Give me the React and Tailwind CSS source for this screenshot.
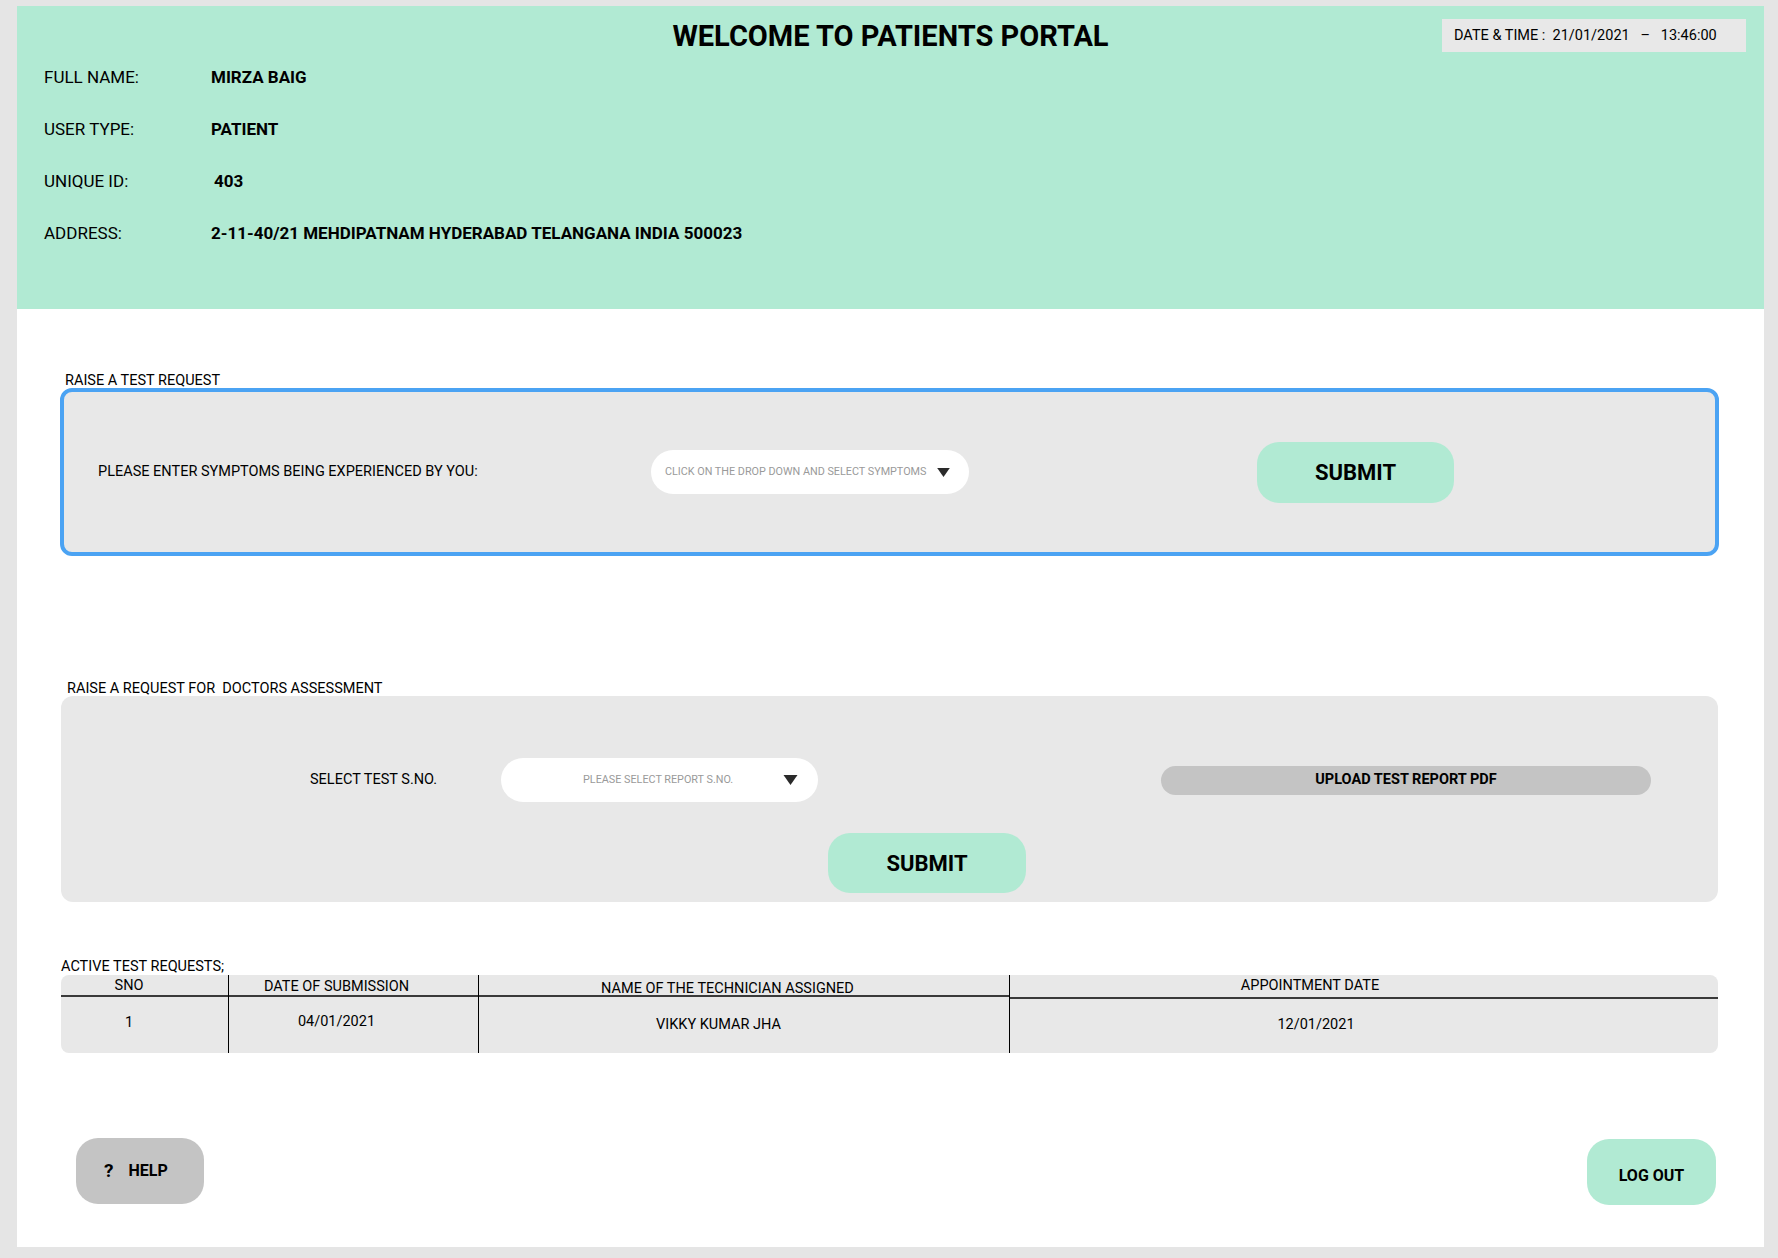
function Caret({ className }) {
  return (
    <svg viewBox="0 0 14 10" className={className}>
      <polygon points="0,0 14,0 7,10" fill="#2a2a2a" />
    </svg>
  )
}

const profile = [
  { label: 'FULL NAME:', value: 'MIRZA BAIG' },
  { label: 'USER TYPE:', value: 'PATIENT' },
  { label: 'UNIQUE ID:', value: '403', nudge: true },
  { label: 'ADDRESS:', value: '2-11-40/21 MEHDIPATNAM HYDERABAD TELANGANA INDIA 500023' },
]

export default function App() {
  return (
    <div className="min-h-screen bg-[#e5e5e5] pl-[17px] pr-[14px] pt-[6px] pb-[11px] font-[Roboto,'Liberation_Sans',sans-serif] text-black">
      <div className="bg-white h-[1241px] flex flex-col">
        {/* header */}
        <div className="h-[303px] bg-[#b1ead3] flex flex-col">
          <div className="grid grid-cols-[1fr_auto_1fr] items-center mt-[13px] h-[33px]">
            <h1 className="col-start-2 text-[29px] font-bold leading-[32px]">WELCOME TO PATIENTS PORTAL</h1>
            <div className="justify-self-end mr-[18px] h-[33px] w-[304px] bg-[#e8e8e8] pl-[12px] flex items-center text-[14.5px] whitespace-pre">
              DATE &amp; TIME :  21/01/2021   –   13:46:00
            </div>
          </div>
          <div className="mt-[13px] flex flex-col gap-[28px]">
            {profile.map((row) => (
              <div key={row.label} className="flex pl-[27px] leading-[24px] text-[17px]">
                <span className="w-[167px]">{row.label}</span>
                <span className={`font-bold ${row.nudge ? 'pl-[3px]' : ''}`}>{row.value}</span>
              </div>
            ))}
          </div>
        </div>

        <div className="pl-[44px] pr-[46px] flex flex-col">
          {/* test request */}
          <div className="mt-[65px] pl-[4px] text-[14.5px] leading-[14px]">RAISE A TEST REQUEST</div>
          <div className="-mx-[1px] h-[168px] rounded-[12px] border-[4px] border-[#4ba3f3] bg-[#e8e8e8] flex items-center pl-[34px]">
            <span className="w-[553px] text-[14.5px]">PLEASE ENTER SYMPTOMS BEING EXPERIENCED BY YOU:</span>
            <div className="w-[318px] h-[44px] rounded-full bg-white flex items-center justify-between pl-[14px] pr-[19px]">
              <span className="text-[10.8px] text-[#9a9a9a]">CLICK ON THE DROP DOWN AND SELECT SYMPTOMS</span>
              <Caret className="w-[13px] h-[9px]" />
            </div>
            <button className="ml-[288px] w-[197px] h-[61px] rounded-[22px] bg-[#b1ead3] text-[22px] font-bold">SUBMIT</button>
          </div>

          {/* doctors assessment */}
          <div className="mt-[125px] pl-[6px] text-[14.5px] leading-[15px] whitespace-pre">RAISE A REQUEST FOR  DOCTORS ASSESSMENT</div>
          <div className="h-[206px] rounded-[12px] bg-[#e8e8e8] flex flex-col">
            <div className="mt-[62px] h-[44px] flex items-center pl-[249px]">
              <span className="w-[191px] text-[14.5px]">SELECT TEST S.NO.</span>
              <div className="w-[317px] h-[44px] rounded-full bg-white flex items-center pl-[82px]">
                <span className="text-[10.8px] text-[#9a9a9a]">PLEASE SELECT REPORT S.NO.</span>
                <Caret className="ml-[50px] w-[15px] h-[10px]" />
              </div>
              <button className="ml-[343px] w-[490px] h-[29px] rounded-full bg-[#c4c4c4] text-[14.5px] font-bold">UPLOAD TEST REPORT PDF</button>
            </div>
            <button className="mt-[31px] ml-[767px] w-[198px] h-[60px] rounded-[22px] bg-[#b1ead3] text-[22px] font-bold">SUBMIT</button>
          </div>

          {/* active requests */}
          <div className="mt-[57px] text-[14.5px] leading-[16px]">ACTIVE TEST REQUESTS;</div>
          <div className="h-[78px] rounded-[8px] bg-[#e8e8e8] grid grid-cols-[167px_250px_531px_1fr] text-[14.5px] leading-[16px] overflow-hidden">
            <div className="flex flex-col">
              <div className="h-[22px] border-b-2 border-[#3a3a3a] text-center pr-[31px] pt-[3px]">SNO</div>
              <div className="text-center pr-[31px] pt-[18px]">1</div>
            </div>
            <div className="flex flex-col border-l border-black">
              <div className="h-[22px] border-b-2 border-[#3a3a3a] text-center pr-[34px] pt-[4px]">DATE OF SUBMISSION</div>
              <div className="text-center pr-[34px] pt-[17px]">04/01/2021</div>
            </div>
            <div className="flex flex-col border-l border-black">
              <div className="h-[22px] border-b-2 border-[#3a3a3a] text-center pr-[33px] pt-[6px]">NAME OF THE TECHNICIAN ASSIGNED</div>
              <div className="text-center pr-[51px] pt-[20px]">VIKKY KUMAR JHA</div>
            </div>
            <div className="flex flex-col border-l border-black">
              <div className="h-[24px] border-b-2 border-[#3a3a3a] text-center pr-[108px] pt-[3px]">APPOINTMENT DATE</div>
              <div className="text-center pr-[96px] pt-[18px]">12/01/2021</div>
            </div>
          </div>

          {/* footer */}
          <div className="mt-[85px] flex items-start justify-between pl-[15px] pr-[2px]">
            <button className="w-[128px] h-[66px] rounded-[22px] bg-[#c4c4c4] flex items-center pl-[28px]">
              <span className="text-[19px] font-bold">?</span>
              <span className="ml-[15px] text-[16px] font-bold">HELP</span>
            </button>
            <button className="mt-[1px] w-[129px] h-[66px] rounded-[22px] bg-[#b1ead3] text-[16px] font-bold pt-[8px]">LOG OUT</button>
          </div>
        </div>
      </div>
    </div>
  )
}
